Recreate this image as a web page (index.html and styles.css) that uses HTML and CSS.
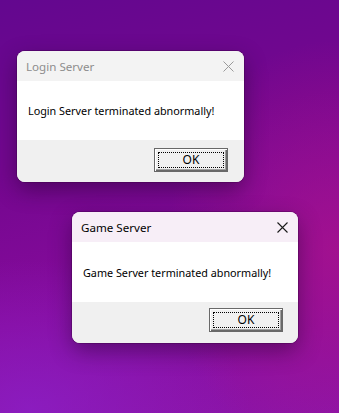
FILE: index.html
```html
<!DOCTYPE html>
<html>
<head>
    <title>Server Errors</title>
    <link rel="stylesheet" href="styles.css">
</head>
<body>

    <div class="desktop">

        <div class="dialog inactive dialog-login">
            <div class="titlebar">
                <span class="title">Login Server</span>
                <svg class="close" width="11" height="11" viewBox="0 0 11 11">
                    <path d="M0.5 0.5 L10.5 10.5 M10.5 0.5 L0.5 10.5" stroke="currentColor" stroke-width="1" fill="none"/>
                </svg>
            </div>
            <div class="message">Login Server terminated abnormally!</div>
            <div class="footer">
                <button class="okButton"><span>OK</span></button>
            </div>
        </div>

        <div class="dialog active dialog-game">
            <div class="titlebar">
                <span class="title">Game Server</span>
                <svg class="close" width="11" height="11" viewBox="0 0 11 11">
                    <path d="M0.5 0.5 L10.5 10.5 M10.5 0.5 L0.5 10.5" stroke="currentColor" stroke-width="1.1" fill="none"/>
                </svg>
            </div>
            <div class="message">Game Server terminated abnormally!</div>
            <div class="footer">
                <button class="okButton"><span>OK</span></button>
            </div>
        </div>

    </div>

</body>
</html>
```

FILE: styles.css
```css
html, body {
    margin: 0;
    padding: 0;
}
.desktop {
    position: relative;
    width: 339px;
    height: 413px;
    overflow: hidden;
    font-family: "Noto Sans", "Open Sans", sans-serif;
    font-size: 10.8px;
    background:
        radial-gradient(ellipse 170px 210px at 335px 250px, rgba(168, 18, 140, 0.8), rgba(168, 18, 140, 0) 100%),
        radial-gradient(ellipse 220px 150px at 30px 410px, rgba(140, 32, 200, 0.75), rgba(140, 32, 200, 0) 100%),
        linear-gradient(165deg, #63078f 0%, #74078f 35%, #860b9c 65%, #8c15a8 100%);
}

/* windows on the desktop */
.dialog {
    position: absolute;
    display: flex;
    flex-direction: column;
    height: 131px;
    border-radius: 8px;
    overflow: hidden;
    background-color: #f0f0f0;
    box-shadow: 0 0 0 1px rgba(60, 0, 70, 0.35), 0 8px 22px rgba(30, 0, 40, 0.45);
}
.dialog-login {
    left: 17px;
    top: 51px;
    width: 227px;
}
.dialog-game {
    left: 72px;
    top: 212px;
    width: 226px;
}

.titlebar {
    display: flex;
    align-items: center;
    justify-content: space-between;
    height: 30px;
    padding: 0 10px 0 9px;
    box-sizing: border-box;
}
.inactive .titlebar {
    background-color: #f3f3f3;
    color: #8d8d8d;
}
.active .titlebar {
    background-color: #f7eef7;
    color: #000;
}
.title {
    font-size: 11.6px;
}
.inactive .close {
    color: #9a9a9a;
}
.active .close {
    color: #1a1a1a;
}

.message {
    display: flex;
    align-items: center;
    height: 59px;
    padding-left: 11px;
    background-color: #fff;
    color: #000;
}
.dialog-game .message {
    height: 60px;
}

.footer {
    flex: 1;
    display: flex;
    justify-content: flex-end;
    align-items: flex-start;
    padding: 8px 16px 0 0;
    background-color: #f0f0f0;
}
.dialog-game .footer {
    padding-top: 6px;
    padding-right: 15px;
}

.okButton {
    width: 74px;
    height: 24px;
    padding: 3px;
    margin: 0;
    font-family: "Noto Sans", "Open Sans", sans-serif;
    font-size: 12px;
    color: #000;
    background-color: #f0f0f0;
    border: 1px solid #696969;
    box-shadow: inset 1px 1px 0 #fff, inset -1px -1px 0 #696969, inset -2px -2px 0 #a0a0a0;
    box-sizing: border-box;
}
.okButton span {
    display: flex;
    align-items: center;
    justify-content: center;
    height: 100%;
    border: 1px dotted #000;
    box-sizing: border-box;
    line-height: 1;
}
```
